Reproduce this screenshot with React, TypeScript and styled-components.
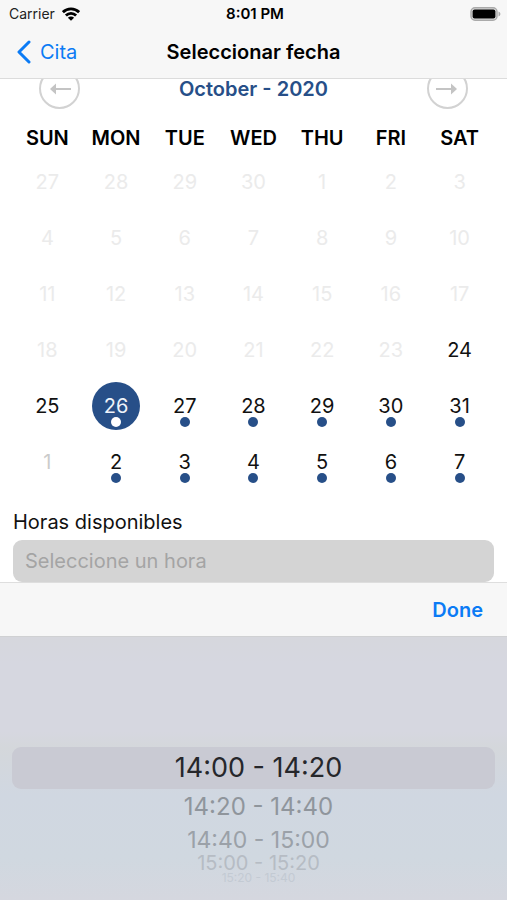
import React, { useState } from "react";
import styled, { createGlobalStyle } from "styled-components";

const NAVY = "#274f88";
const BLUE = "#0b7bf5";

const GlobalStyle = createGlobalStyle`
  *, *::before, *::after { box-sizing: border-box; }
  body {
    margin: 0;
    background: #fff;
    color: #000;
    font-family: Inter, "Liberation Sans", sans-serif;
    font-size: 20px;
  }
  button, input { font: inherit; color: inherit; }
  button { padding: 0; border: 0; background: none; cursor: pointer; }
`;

const Screen = styled.div`
  display: flex;
  flex-direction: column;
  min-height: 100vh;
`;

const TopBar = styled.header`
  position: relative;
  z-index: 1;
  background: #f7f7f7;
  border-bottom: 1px solid #dcdcdc;
`;

const StatusBar = styled.div`
  display: grid;
  grid-template-columns: 1fr auto 1fr;
  align-items: center;
  height: 26px;
  padding: 2px 6px 0 9px;
  font-size: 14px;
  line-height: 20px;
`;

const Carrier = styled.span`
  display: flex;
  align-items: center;
  gap: 7px;
  color: #222;
`;

const Clock = styled.time`
  font-size: 15px;
  font-weight: 600;
`;

const BatteryIcon = styled.svg`
  justify-self: end;
`;

const NavBar = styled.nav`
  display: grid;
  grid-template-columns: 1fr auto 1fr;
  align-items: center;
  height: 52px;
  padding: 0 16px;
`;

const BackLink = styled.a`
  display: flex;
  align-items: center;
  gap: 9px;
  color: ${BLUE};
  text-decoration: none;
`;

const Title = styled.h1`
  margin: 0;
  font-size: 20px;
  line-height: 24px;
  font-weight: 600;
`;

const Content = styled.main`
  padding: 0 13px;
  margin-top: -11px;
`;

const MonthRow = styled.div`
  display: flex;
  align-items: center;
  justify-content: space-between;
  padding: 0 26px;
  margin-bottom: 15px;
`;

const MonthName = styled.h2`
  margin: 0;
  font-size: 20px;
  line-height: 24px;
  font-weight: 600;
  color: ${NAVY};
`;

const ArrowButton = styled.button`
  display: grid;
  place-items: center;
  width: 41px;
  height: 41px;
  border: 2px solid #d2d2d2;
  border-radius: 50%;
  color: #c4c4c4;
`;

const Calendar = styled.table`
  width: 100%;
  table-layout: fixed;
  border-collapse: collapse;
`;

const Weekday = styled.th`
  height: 30px;
  padding: 0;
  font-size: 20px;
  line-height: 28px;
  font-weight: 600;
  vertical-align: top;
`;

const DayCell = styled.td`
  height: 56px;
  padding: 0;
  text-align: center;
  vertical-align: middle;
`;

type DayKind = "past" | "other" | "open";

const dayColor: Record<DayKind, string> = {
  past: "#ebebeb",
  other: "#cbcbcb",
  open: "#111",
};

const DayButton = styled.button<{ $kind: DayKind; $selected: boolean }>`
  position: relative;
  display: block;
  width: 48px;
  height: 48px;
  margin: 0 auto;
  border-radius: 50%;
  line-height: 24px;
  background: ${(p) => (p.$selected ? NAVY : "transparent")};
  color: ${(p) => (p.$selected ? "#eef3fa" : dayColor[p.$kind])};
`;

const Dot = styled.span<{ $selected: boolean }>`
  position: absolute;
  left: 50%;
  bottom: 3px;
  width: 10px;
  height: 10px;
  margin-left: -5px;
  border-radius: 50%;
  background: ${(p) => (p.$selected ? "#fff" : NAVY)};
`;

const Field = styled.div`
  display: flex;
  flex-direction: column;
  gap: 6px;
  padding-top: 20px;
`;

const FieldLabel = styled.label`
  line-height: 24px;
  color: #111;
`;

const HourInput = styled.input`
  width: 100%;
  height: 42px;
  padding: 0 12px;
  border: 0;
  border-radius: 9px;
  background: #d4d4d4;
  outline: none;
  &::placeholder { color: #a4a4a4; opacity: 1; }
`;

const Sheet = styled.section`
  display: flex;
  flex-direction: column;
  flex: 1;
`;

const SheetBar = styled.div`
  display: flex;
  align-items: center;
  justify-content: flex-end;
  height: 55px;
  padding: 0 24px;
  background: #f7f7f7;
  border-top: 1px solid #dedede;
  border-bottom: 1px solid #d0d1d3;
`;

const DoneButton = styled.button`
  font-weight: 600;
  line-height: 24px;
  color: ${BLUE};
`;

const Wheel = styled.div`
  display: flex;
  flex-direction: column;
  flex: 1;
  padding: 110px 12px 12px;
  background: linear-gradient(
    #d6d7dd 0%, #d6d7e0 10%, #d6d7e0 36%, #d4d7db 42%,
    #d0d7e1 60%, #d0d8e0 84%, #d5d7df 100%
  );
`;

const depthStyle = [
  { height: 42, size: 27, color: "#26272b" },
  { height: 36, size: 24, color: "#8f959c" },
  { height: 30, size: 23, color: "#9ba1a8" },
  { height: 16, size: 20, color: "#b6bcc4" },
  { height: 14, size: 12, color: "#c3cad3" },
];

const HourOption = styled.button<{ $depth: number }>`
  flex: none;
  padding-left: 10px;
  height: ${(p) => depthStyle[p.$depth].height}px;
  line-height: ${(p) => depthStyle[p.$depth].height}px;
  font-size: ${(p) => depthStyle[p.$depth].size}px;
  color: ${(p) => depthStyle[p.$depth].color};
  background: ${(p) => (p.$depth === 0 ? "#c9cad3" : "transparent")};
  border-radius: ${(p) => (p.$depth === 0 ? "9px" : "0")};
`;

const weekdays = ["SUN", "MON", "TUE", "WED", "THU", "FRI", "SAT"];

const weeks = [
  [27, 28, 29, 30, 1, 2, 3],
  [4, 5, 6, 7, 8, 9, 10],
  [11, 12, 13, 14, 15, 16, 17],
  [18, 19, 20, 21, 22, 23, 24],
  [25, 26, 27, 28, 29, 30, 31],
  [1, 2, 3, 4, 5, 6, 7],
];

const hours = [
  "14:00 - 14:20",
  "14:20 - 14:40",
  "14:40 - 15:00",
  "15:00 - 15:20",
  "15:20 - 15:40",
];

// Positions in the six-week grid, counted from its first cell.
const FIRST_OPEN = 27;
const FIRST_WITH_SLOTS = 29;
const NEXT_MONTH_SUNDAY = 35;

function kindOf(index: number): DayKind {
  if (index < FIRST_OPEN) return "past";
  return index === NEXT_MONTH_SUNDAY ? "other" : "open";
}

function hasSlots(index: number) {
  return index >= FIRST_WITH_SLOTS && index !== NEXT_MONTH_SUNDAY;
}

function WifiIcon() {
  return (
    <svg width="18" height="14" viewBox="0 0 18 14" aria-hidden="true">
      <g fill="none" stroke="#000" strokeWidth="2.8">
        <path d="M0.9 5.2a11.5 11.5 0 0 1 16.2 0" />
        <path d="M3.9 8.5a7.2 7.2 0 0 1 10.2 0" />
      </g>
      <path d="M9 13.8 5.9 10.7a4.4 4.4 0 0 1 6.2 0z" />
    </svg>
  );
}

function Arrow({ flip }: { flip?: boolean }) {
  return (
    <svg width="24" height="14" viewBox="0 0 24 14" aria-hidden="true">
      <g transform={flip ? "rotate(180 12 7)" : undefined}>
        <path d="M7 7H23" stroke="currentColor" strokeWidth="2" />
        <path d="M2 7 8 1.5V12.5z" fill="currentColor" />
      </g>
    </svg>
  );
}

export default function App() {
  const [selected, setSelected] = useState(FIRST_WITH_SLOTS);
  const [hour, setHour] = useState("");

  return (
    <Screen>
      <GlobalStyle />
      <TopBar>
        <StatusBar>
          <Carrier>
            Carrier
            <WifiIcon />
          </Carrier>
          <Clock>8:01 PM</Clock>
          <BatteryIcon width="31" height="14" viewBox="0 0 31 14" aria-label="Battery full">
            <rect x="1" y="0.8" width="26" height="12.4" rx="4" fill="#ddd" stroke="#aaa" strokeWidth="1.5" />
            <rect x="2.6" y="2.4" width="22.8" height="9.2" rx="2" />
            <path d="M28.5 4.5c2.5 1 2.5 4 0 5z" fill="#aaa" />
          </BatteryIcon>
        </StatusBar>
        <NavBar>
          <BackLink href="#cita">
            <svg width="15" height="24" viewBox="0 0 15 24" aria-hidden="true">
              <path d="M13 2 3 12l10 10" fill="none" stroke="currentColor" strokeWidth="3" strokeLinecap="round" strokeLinejoin="round" />
            </svg>
            Cita
          </BackLink>
          <Title>Seleccionar fecha</Title>
        </NavBar>
      </TopBar>

      <Content>
        <MonthRow>
          <ArrowButton aria-label="Previous month"><Arrow /></ArrowButton>
          <MonthName>October - 2020</MonthName>
          <ArrowButton aria-label="Next month"><Arrow flip /></ArrowButton>
        </MonthRow>
        <Calendar>
          <thead>
            <tr>{weekdays.map((d) => <Weekday key={d} scope="col">{d}</Weekday>)}</tr>
          </thead>
          <tbody>
            {weeks.map((week, w) => (
              <tr key={w}>
                {week.map((day, d) => {
                  const index = w * 7 + d;
                  const kind = kindOf(index);
                  const isSelected = selected === index;
                  return (
                    <DayCell key={index}>
                      <DayButton
                        $kind={kind}
                        $selected={isSelected}
                        disabled={kind !== "open"}
                        onClick={() => setSelected(index)}
                      >
                        {day}
                        {hasSlots(index) && <Dot $selected={isSelected} />}
                      </DayButton>
                    </DayCell>
                  );
                })}
              </tr>
            ))}
          </tbody>
        </Calendar>
        <Field>
          <FieldLabel htmlFor="hour">Horas disponibles</FieldLabel>
          <HourInput id="hour" placeholder="Seleccione un hora" value={hour} readOnly />
        </Field>
      </Content>

      <Sheet>
        <SheetBar>
          <DoneButton onClick={() => setHour(hours[0])}>Done</DoneButton>
        </SheetBar>
        <Wheel role="listbox" aria-label="Horas disponibles">
          {hours.map((h, i) => (
            <HourOption
              key={h}
              role="option"
              aria-selected={i === 0}
              $depth={i}
              onClick={() => setHour(h)}
            >
              {h}
            </HourOption>
          ))}
        </Wheel>
      </Sheet>
    </Screen>
  );
}
